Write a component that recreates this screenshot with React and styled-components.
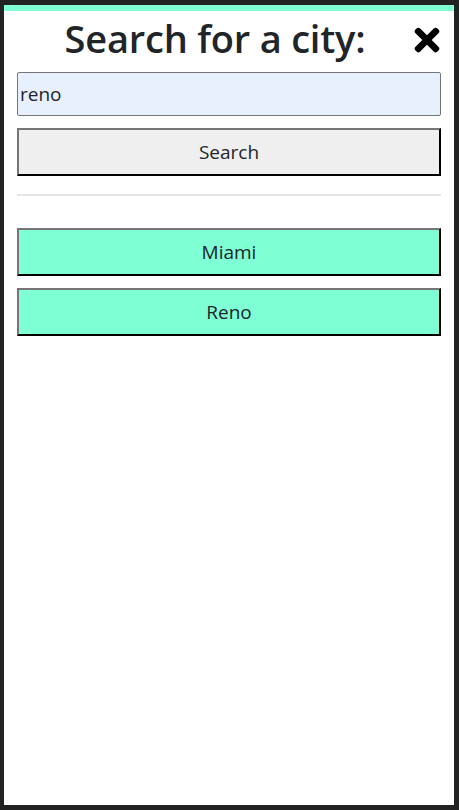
import React, { useState } from "react";
import styled, { createGlobalStyle } from "styled-components";
import { FaTimes } from "react-icons/fa";

const GlobalStyle = createGlobalStyle`
  html, body {
    margin: 0;
    padding: 0;
    background: #222222;
  }
  * {
    box-sizing: border-box;
  }
`;

const cities = ["Miami", "Reno"];

const App = () => {
  const [query, setQuery] = useState("reno");

  return (
    <>
      <GlobalStyle />
      <Frame>
        <Panel>
          <Header>
            <Title>Search for a city:</Title>
            <Close aria-label="close">
              <FaTimes />
            </Close>
          </Header>
          <Body>
            <Input value={query} onChange={(e) => setQuery(e.target.value)} />
            <Button>Search</Button>
            <Divider />
            <List>
              {cities.map((c) => (
                <Button key={c} $city>
                  {c}
                </Button>
              ))}
            </List>
          </Body>
        </Panel>
      </Frame>
    </>
  );
};
export default App;

const Frame = styled.div`
height: 810px;
width: 459px;
padding: 5px 5px 5px 4px;
background: #222222;
`;

const Panel = styled.div`
height: 100%;
background: #ffffff;
border-top: 6px solid #7fffd4;
display: flex;
flex-direction: column;
font-family: "Open Sans", "Noto Sans", sans-serif;
color: #212529;
`;

const Header = styled.div`
display: flex;
align-items: center;
padding: 0 13px;
height: 55px;
`;

const Title = styled.h1`
flex: 1;
margin: 0;
text-align: center;
font-size: 38px;
font-weight: 600;
line-height: 1.2;
letter-spacing: -0.2px;
`;

const Close = styled.div`
display: flex;
align-items: center;
justify-content: center;
width: 28px;
height: 30px;
font-size: 36px;
color: #000000;
margin-top: 2px;
`;

const Body = styled.div`
display: flex;
flex-direction: column;
padding: 0 13px;
`;

const Input = styled.input`
height: 44px;
width: 100%;
margin-top: 6px;
padding: 0 2px;
background: #e8f0fe;
border: 1px solid #767676;
border-radius: 2px;
font-family: "Open Sans", "Noto Sans", sans-serif;
font-size: 19px;
color: #212529;
outline: none;
`;

const Button = styled.button`
height: 48px;
width: 100%;
margin-top: ${(p) => (p.$city ? "0" : "12px")};
background: ${(p) => (p.$city ? "#7fffd4" : "#efefef")};
border: 2px outset #767676;
border-color: #767676 #222222 #222222 #767676;
font-family: "Open Sans", "Noto Sans", sans-serif;
font-size: 19px;
color: #212529;
cursor: pointer;
`;

const Divider = styled.hr`
margin: 18px 0 0 0;
border: none;
border-top: 2px solid #e6e6e6;
`;

const List = styled.div`
display: flex;
flex-direction: column;
gap: 12px;
margin-top: 32px;
`;
